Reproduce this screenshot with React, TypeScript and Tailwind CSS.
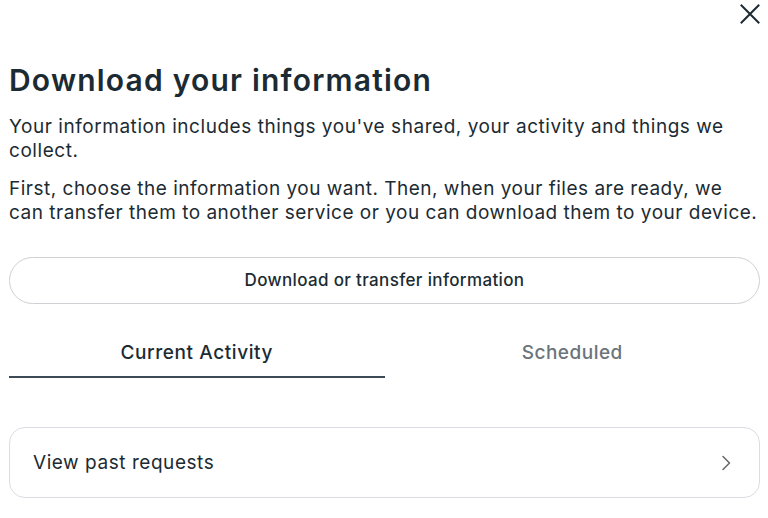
import { useState } from "react";

export default function App() {
  const [tab, setTab] = useState<"current" | "scheduled">("current");

  return (
    <div className="min-h-[518px] bg-white pl-[9px] pr-[8px] text-[#1c2b33]" style={{ fontFamily: "Inter, 'Noto Sans', sans-serif" }}>
      <div className="flex h-[24px] items-start justify-end pt-[4px]">
        <button type="button" aria-label="Close" className="h-[20px] w-[20px] text-[#1c2b33]">
          <svg viewBox="0 0 20 20" className="h-[20px] w-[20px]" fill="none" stroke="currentColor" strokeWidth="2" strokeLinecap="square">
            <path d="M1.5 1.5l17 17M18.5 1.5l-17 17" />
          </svg>
        </button>
      </div>

      <h1 className="mt-[38px] text-[30px] font-semibold leading-[36px] tracking-[1.2px]">Download your information</h1>
      <p className="mt-[17px] text-[19px] leading-[24px] tracking-[0.55px]">Your information includes things you've shared, your activity and things we collect.</p>
      <p className="mt-[14px] whitespace-nowrap text-[19px] leading-[24px] tracking-[0.5px]">
        First, choose the information you want. Then, when your files are ready, we
        <br />
        can transfer them to another service or you can download them to your device.
      </p>

      <button type="button" className="mt-[32px] flex h-[47px] w-full items-center justify-center rounded-full border border-[#ced0d4] text-[17px] font-medium tracking-[0.35px]">
        Download or transfer information
      </button>

      <div className="mt-[27px] flex">
        <button type="button" onClick={() => setTab("current")} className={`h-[47px] flex-1 border-b-2 text-[19px] font-medium tracking-[0.6px] ${tab === "current" ? "border-[#3b4a54] text-[#1c2b33]" : "border-transparent text-[#6b747a]"}`}>Current Activity</button>
        <button type="button" onClick={() => setTab("scheduled")} className={`h-[47px] flex-1 border-b-2 text-[19px] font-medium tracking-[0.5px] ${tab === "scheduled" ? "border-[#3b4a54] text-[#1c2b33]" : "border-transparent text-[#6b747a]"}`}>Scheduled</button>
      </div>

      <button type="button" className="mt-[49px] flex h-[71px] w-full items-center justify-between rounded-[16px] border border-[#dadde1] pl-[23px] pr-[27px] text-left">
        <span className="text-[19px] leading-[24px] tracking-[0.55px]">View past requests</span>
        <svg viewBox="0 0 12 16" className="h-[16px] w-[12px] text-[#65676b]" fill="none" stroke="currentColor" strokeWidth="1.5" strokeLinecap="round" strokeLinejoin="round">
          <path d="M3 1.5L9.5 8 3 14.5" />
        </svg>
      </button>
    </div>
  );
}
